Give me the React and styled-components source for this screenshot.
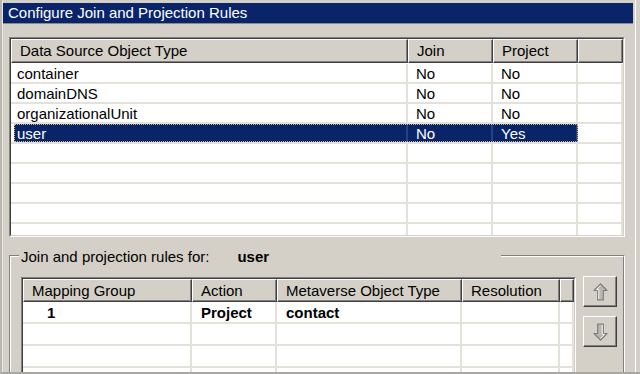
import React from 'react'
import styled, { createGlobalStyle } from 'styled-components'

const GlobalStyle = createGlobalStyle`
  html, body {
    margin: 0;
    padding: 0;
    background: #d4d0c8;
  }
  body {
    font-family: "Liberation Sans", Arial, sans-serif;
    font-size: 15px;
    color: #000;
  }
  * { box-sizing: border-box; }
`

const Page = styled.div`
  width: 640px;
  height: 374px;
  overflow: hidden;
  background: #d4d0c8;
  border-left: 2px solid #bab7b1;
  border-bottom: 2px solid #a9a7a2;
  padding-right: 4px;
`

const Frame = styled.div`
  height: 100%;
  overflow: hidden;
  border-left: 1px solid #eceae6;
  border-right: 1px solid #fff;
  padding-top: 3px;
  display: flex;
  flex-direction: column;
`

const TitleBar = styled.div`
  flex: none;
  height: 21px;
  margin-right: 2px;
  padding: 0 0 2px 5px;
  background: #0a246a;
  color: #fff;
  display: flex;
  align-items: center;
  border-bottom: 1px solid #8c8a86;
`

// sunken list view frame
const ListBox = styled.div`
  flex: ${p => (p.$grow ? 1 : 'none')};
  height: ${p => p.$height}px;
  margin: ${p => p.$margin || 0};
  border: 1px solid;
  border-color: #808080 #fff #fff #808080;
  background: #fff;
`

const ListInner = styled.div`
  height: 100%;
  overflow: hidden;
  border: 1px solid;
  border-color: #404040 #d4d0c8 #d4d0c8 #404040;
`

const HeadRow = styled.div`
  display: flex;
  height: ${p => p.$height}px;
  margin-bottom: ${p => p.$gap || 0}px;
`

const HeadCell = styled.div`
  flex: ${p => (p.$width ? 'none' : 1)};
  width: ${p => (p.$width ? `${p.$width}px` : 'auto')};
  height: 100%;
  padding: 0 0 1px 8px;
  background: #d4d0c8;
  border: 1px solid;
  border-color: #fff #404040 #404040 #fff;
  box-shadow: inset -1px -1px #808080;
  display: flex;
  align-items: center;
  white-space: nowrap;
  overflow: hidden;
`

const Row = styled.div`
  display: flex;
  height: ${p => p.$height}px;
  padding-left: ${p => p.$indent || 0}px;
  border-bottom: 2px solid #e4e1db;
`

const Highlight = styled.div`
  display: flex;
  background: ${p => (p.$on ? '#0a246a' : 'transparent')};
  color: ${p => (p.$on ? '#fff' : 'inherit')};
  outline: ${p => (p.$on ? '1px dotted #c9b77c' : 'none')};
  outline-offset: -1px;
`

const Cell = styled.div`
  flex: ${p => (p.$width ? 'none' : 1)};
  width: ${p => (p.$width ? `${p.$width}px` : 'auto')};
  padding-left: ${p => p.$pad}px;
  border-right: 2px solid ${p => (p.$on ? '#2a4080' : '#e4e1db')};
  font-weight: ${p => (p.$bold ? 700 : 400)};
  display: flex;
  align-items: center;
  white-space: nowrap;
  overflow: hidden;
`

// etched group box, two nested borders
const GroupOuter = styled.div`
  flex: none;
  height: 140px;
  margin: 18px 10px 0 6px;
  border: 1px solid;
  border-color: #808080 #fff #fff #808080;
`

const GroupInner = styled.div`
  height: 100%;
  border: 1px solid;
  border-color: #fff #808080 #808080 #fff;
  display: flex;
  flex-direction: column;
`

const Legend = styled.div`
  margin: -9px 0 0 8px;
  padding: 0 2px;
  width: 482px;
  height: 17px;
  background: #d4d0c8;
  display: flex;
  align-items: center;
  gap: 28px;
`

const Strong = styled.span`
  font-weight: 700;
`

const GroupBody = styled.div`
  display: flex;
  gap: 7px;
  margin-top: 12px;
  padding: 0 6px 0 10px;
`

const ButtonColumn = styled.div`
  display: flex;
  flex-direction: column;
  gap: 9px;
  margin-top: -1px;
`

const ArrowButton = styled.button`
  width: 34px;
  height: 31px;
  padding: 0;
  background: #d4d0c8;
  border: 1px solid;
  border-color: #fff #404040 #404040 #fff;
  box-shadow: inset -1px -1px #808080;
  display: flex;
  align-items: center;
  justify-content: center;
`

const Arrow = ({ down }) => (
  <svg width="15" height="18" viewBox="0 0 15 18" style={down ? { transform: 'rotate(180deg)' } : undefined}>
    <polygon
      points="7.5,0.8 14,7.5 10.3,7.5 10.3,17 4.7,17 4.7,7.5 1,7.5"
      fill="#b9b6af"
      stroke="#7a7a7a"
      strokeWidth="1.1"
      strokeLinejoin="round"
    />
    <polyline points="7.5,2.6 3.3,6.6 5.8,6.6 5.8,16" fill="none" stroke="#f4f3f0" strokeWidth="1" />
  </svg>
)

const topColumns = [
  { label: 'Data Source Object Type', width: 397 },
  { label: 'Join', width: 85 },
  { label: 'Project', width: 85 },
  { label: '' },
]

const topRows = [
  { cells: ['container', 'No', 'No'] },
  { cells: ['domainDNS', 'No', 'No'] },
  { cells: ['organizationalUnit', 'No', 'No'] },
  { cells: ['user', 'No', 'Yes'], selected: true },
  { cells: ['', '', ''] },
  { cells: ['', '', ''] },
  { cells: ['', '', ''] },
  { cells: ['', '', ''] },
  { cells: ['', '', ''] },
]

const ruleColumns = [
  { label: 'Mapping Group', width: 169 },
  { label: 'Action', width: 85 },
  { label: 'Metaverse Object Type', width: 185 },
  { label: 'Resolution', width: 98 },
  { label: '' },
]

const ruleRows = [
  ['1', 'Project', 'contact', ''],
  ['', '', '', ''],
  ['', '', '', ''],
  ['', '', '', ''],
]

const ObjectTypeList = () => (
  <ListBox $height={200} $margin="13px 10px 0 6px">
    <ListInner>
      <HeadRow $height={24} $gap={1}>
        {topColumns.map((c, i) => (
          <HeadCell key={i} $width={c.width}>{c.label}</HeadCell>
        ))}
      </HeadRow>
      {topRows.map((r, i) => (
        <Row key={i} $height={20} $indent={3}>
          <Highlight $on={r.selected}>
            {r.cells.map((text, j) => (
              <Cell key={j} $width={j === 0 ? 394 : 85} $pad={j === 0 ? 3 : 8} $on={r.selected}>
                {text}
              </Cell>
            ))}
          </Highlight>
          <Cell $pad={0} />
        </Row>
      ))}
    </ListInner>
  </ListBox>
)

const RuleList = () => (
  <ListBox $grow $height={100}>
    <ListInner>
      <HeadRow $height={23}>
        {ruleColumns.map((c, i) => (
          <HeadCell key={i} $width={c.width}>{c.label}</HeadCell>
        ))}
      </HeadRow>
      {ruleRows.map((r, i) => (
        <Row key={i} $height={22}>
          {r.map((text, j) => (
            <Cell key={j} $width={ruleColumns[j].width} $pad={j === 0 ? 24 : 9} $bold>
              {text}
            </Cell>
          ))}
          <Cell $pad={0} />
        </Row>
      ))}
    </ListInner>
  </ListBox>
)

export default function App() {
  return (
    <>
      <GlobalStyle />
      <Page>
        <Frame>
          <TitleBar>Configure Join and Projection Rules</TitleBar>
          <ObjectTypeList />
          <GroupOuter>
            <GroupInner>
              <Legend>
                <span>Join and projection rules for:</span>
                <Strong>user</Strong>
              </Legend>
              <GroupBody>
                <RuleList />
                <ButtonColumn>
                  <ArrowButton type="button" aria-label="Move up">
                    <Arrow />
                  </ArrowButton>
                  <ArrowButton type="button" aria-label="Move down">
                    <Arrow down />
                  </ArrowButton>
                </ButtonColumn>
              </GroupBody>
            </GroupInner>
          </GroupOuter>
        </Frame>
      </Page>
    </>
  )
}
